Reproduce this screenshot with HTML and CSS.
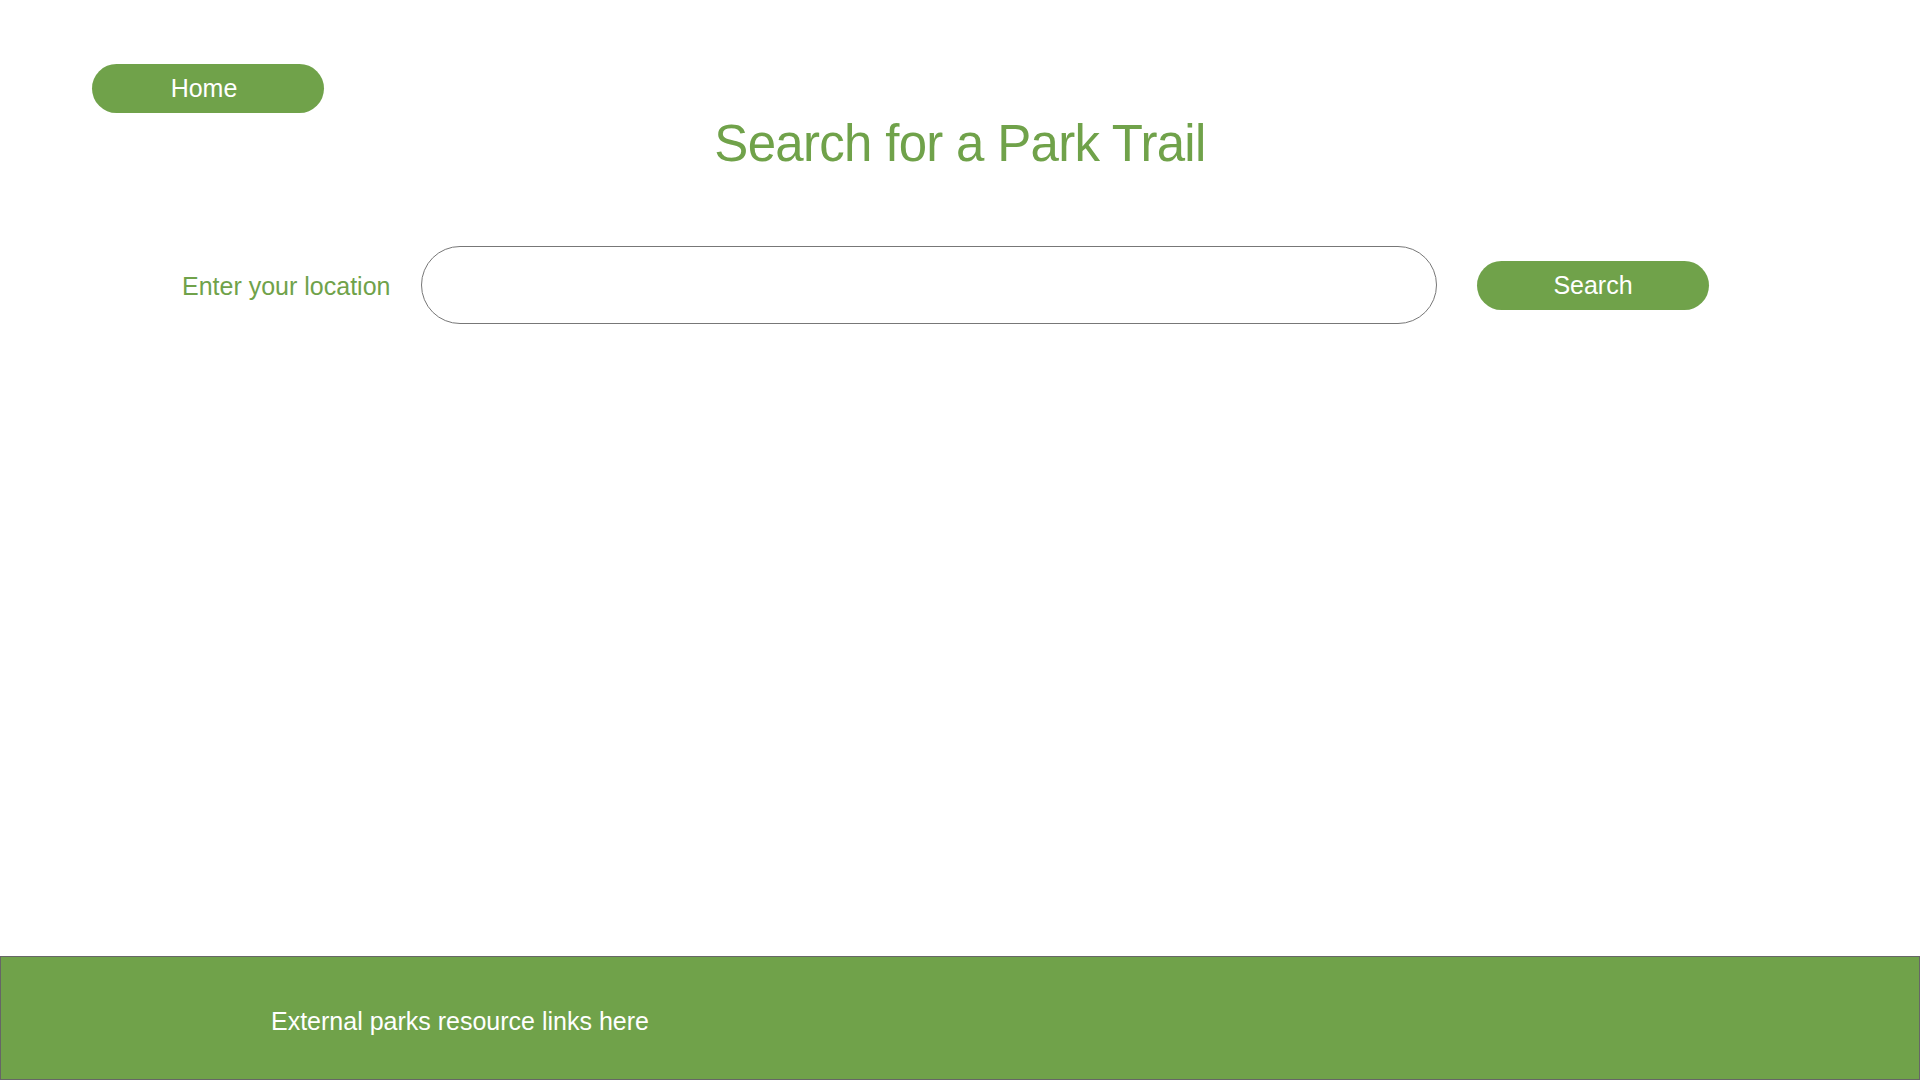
FILE: index.html
```html
<!DOCTYPE html>
<html lang="en">
<head>
<meta charset="utf-8">
<title>Search for a Park Trail</title>
<link rel="stylesheet" href="styles.css">
</head>
<body>
<div class="page">
  <header class="header">
    <a class="btn btn-home" href="#">Home</a>
    <h1 class="title">Search for a Park Trail</h1>
  </header>
  <main class="main">
    <form class="search-row" onsubmit="return false;">
      <label class="search-label" for="loc">Enter your location</label>
      <input class="search-input" id="loc" type="text">
      <button class="btn btn-search" type="submit">Search</button>
    </form>
  </main>
  <footer class="footer">
    <span class="footer-text">External parks resource links here</span>
  </footer>
</div>
</body>
</html>
```
FILE: styles.css
```css
* { box-sizing: border-box; }
html, body { margin: 0; padding: 0; background: #fff; }
body { font-family: "Liberation Sans", Arial, Helvetica, sans-serif; }
.page { display: flex; flex-direction: column; min-height: 100vh; }
.header { padding: 64px 0 0 92px; }
.btn {
  display: flex; align-items: center; justify-content: center;
  width: 232px; height: 49px; border-radius: 25px;
  background: #70a24a; color: #fff; font-size: 25px;
  text-decoration: none; border: none; font-family: inherit; padding: 0;
}
.btn-home { padding-right: 8px; }
.title {
  margin: 5px 0 0 -92px; text-align: center;
  font-size: 51px; line-height: 51px; font-weight: 400; color: #70a24a;
  letter-spacing: -0.7px;
}
.main { flex: 1; }
.search-row {
  display: flex; align-items: center;
  margin: 77px 0 0 182px;
}
.search-label { flex: 0 0 239px; font-size: 25px; color: #70a24a; padding-top: 2px; }
.search-input {
  width: 1016px; height: 78px; border: 1px solid #777; border-radius: 39px;
  outline: none; font-size: 25px; padding: 0 30px; font-family: inherit;
}
.btn-search { margin-left: 40px; }
.footer {
  height: 124px; background: #70a24a; border: 1px solid #666;
  display: flex; align-items: center; padding: 6px 0 0 270px;
}
.footer-text { color: #fff; font-size: 25px; }
```
